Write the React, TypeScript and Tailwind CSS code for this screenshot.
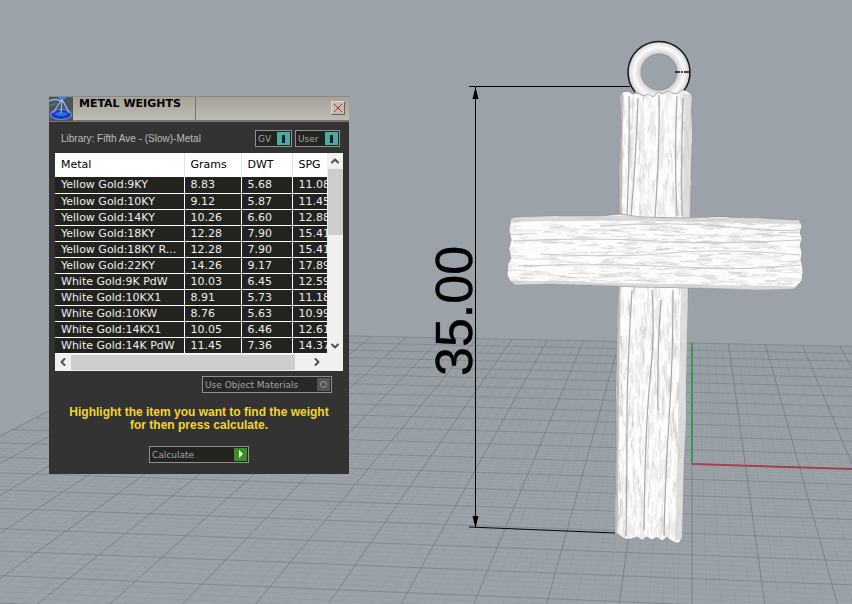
import { useState } from "react";
import { ChevronDown, ChevronLeft, ChevronRight, ChevronUp } from "lucide-react";

const METALS = [
  ["Yellow Gold:9KY", "8.83", "5.68", "11.08"],
  ["Yellow Gold:10KY", "9.12", "5.87", "11.45"],
  ["Yellow Gold:14KY", "10.26", "6.60", "12.88"],
  ["Yellow Gold:18KY", "12.28", "7.90", "15.41"],
  ["Yellow Gold:18KY R...", "12.28", "7.90", "15.41"],
  ["Yellow Gold:22KY", "14.26", "9.17", "17.89"],
  ["White Gold:9K PdW", "10.03", "6.45", "12.59"],
  ["White Gold:10KX1", "8.91", "5.73", "11.18"],
  ["White Gold:10KW", "8.76", "5.63", "10.99"],
  ["White Gold:14KX1", "10.05", "6.46", "12.61"],
  ["White Gold:14K PdW", "11.45", "7.36", "14.37"],
];

// construction plane -> screen
function project(u: number, v: number) {
  const d = 1 - 0.0383 * v - 0.00426 * u;
  return `${(692 + (53.3 * u) / d).toFixed(1)} ${(80 + 384 / d).toFixed(1)}`;
}

function depthLines(step: number) {
  let d = "";
  for (let u = -14; u <= 10; u += step) {
    d += `M${project(u, -12)}L${project(u, 12)}`;
  }
  return d;
}

function crossLines(step: number) {
  let d = "";
  for (let v = -12; v <= 12; v += step) {
    d += `M${project(-14, v)}L${project(10, v)}`;
  }
  return d;
}

const MINOR = depthLines(0.2) + crossLines(0.2);

// small seeded generator so the grain is the same on every render
function makeRandom(seed: number) {
  let s = seed;
  return () => {
    s = (s * 16807) % 2147483647;
    return s / 2147483647;
  };
}

function grain(seed: number, count: number, x: number, y: number, w: number, h: number, vertical: boolean) {
  const rnd = makeRandom(seed);
  let d = "";
  for (let i = 0; i < count; i++) {
    const px = x + rnd() * w;
    const py = y + rnd() * h;
    const len = 4 + rnd() * 18;
    const a = (rnd() - 0.5) * 3;
    const b = (rnd() - 0.5) * 2;
    d += vertical
      ? `M${px.toFixed(1)} ${py.toFixed(1)}q${a.toFixed(1)} ${(len / 2).toFixed(1)} ${b.toFixed(1)} ${len.toFixed(1)}`
      : `M${px.toFixed(1)} ${py.toFixed(1)}q${(len / 2).toFixed(1)} ${a.toFixed(1)} ${len.toFixed(1)} ${b.toFixed(1)}`;
  }
  return d;
}

const POST =
  "M620 96L623 92L628 91L632 94L638 93L643 96L649 94L653 97L658 92L663 94L668 91L673 93L677 94L682 90L687 91L691 94L692 98L691 110L692 130L691 165L690 216L688 290L687 340L686 380L686 420L684 460L683 500L682 537L680 542L676 543L670 540L667 537L662 541L657 537L652 540L647 537L642 540L637 537L631 539L625 539L619 535L615 532L616 450L616 380L618 300L619 216L619 170L621 130Z";
const BEAM =
  "M511 219L516 217L550 216L600 216L620 214L640 217L680 218L720 217L760 218L790 220L799 220L802 226L800 232L802 238L800 246L802 252L801 260L803 270L802 280L797 286L794 289L760 290L700 288L640 287L590 285L550 284L516 285L510 281L507 275L508 264L511 258L509 248L511 240L509 230Z";

function Viewport() {
  return (
    <svg
      className="absolute inset-0 h-full w-full"
      viewBox="0 0 852 604"
      preserveAspectRatio="xMinYMin slice"
      role="img"
      aria-label="Cross pendant, 35.00 high"
    >
      <defs>
        <radialGradient id="ring" gradientUnits="userSpaceOnUse" cx="659" cy="72" r="31">
          <stop offset="0.56" stopColor="#c4c4c4" />
          <stop offset="0.66" stopColor="#dedede" />
          <stop offset="0.8" stopColor="#fbfbfb" />
          <stop offset="0.92" stopColor="#e2e2e2" />
          <stop offset="1" stopColor="#bcbcbc" />
        </radialGradient>
        <clipPath id="postClip">
          <path d={POST} />
        </clipPath>
        <clipPath id="beamClip">
          <path d={BEAM} />
        </clipPath>
        <filter id="grainV" x="0" y="0" width="1" height="1">
          <feTurbulence type="fractalNoise" baseFrequency="0.2 0.05" numOctaves="4" seed="4" />
          <feColorMatrix values="0 0 0 0 0.72  0 0 0 0 0.72  0 0 0 0 0.72  6 0 0 0 -2.8" />
        </filter>
        <filter id="grainH" x="0" y="0" width="1" height="1">
          <feTurbulence type="fractalNoise" baseFrequency="0.04 0.18" numOctaves="4" seed="9" />
          <feColorMatrix values="0 0 0 0 0.74  0 0 0 0 0.74  0 0 0 0 0.74  6 0 0 0 -2.9" />
        </filter>
      </defs>

      <rect width="852" height="604" fill="#9ba2aa" />
      <path d={MINOR} fill="none" stroke="#77818a" strokeWidth="1" opacity="0.16" />
      <path d={crossLines(1)} fill="none" stroke="#6d757d" strokeWidth="1" opacity="0.45" />
      <path d={depthLines(1)} fill="none" stroke="#6d757d" strokeWidth="1" opacity="0.6" />
      <path d="M692 343V464" stroke="#3f9551" strokeWidth="2" />
      <path d="M692 464L852 469" stroke="#a4424d" strokeWidth="2" />

      {/* jump ring */}
      <circle cx="659" cy="72" r="24.500" fill="none" stroke="url(#ring)" strokeWidth="13" />
      <path d="M635 92A31 31 0 1 1 683 92" fill="none" stroke="#161616" strokeWidth="1.500" />
      <circle cx="659" cy="72" r="18" fill="none" stroke="#85888b" strokeWidth="0.700" />
      <path d="M675 72h14" stroke="#111" strokeWidth="1.500" strokeDasharray="5 1 2 1" />

      {/* upright */}
      <path d={POST} fill="#fcfcfc" stroke="#8f8f8f" strokeWidth="0.800" />
      <g clipPath="url(#postClip)">
        <rect x="612" y="88" width="84" height="458" filter="url(#grainV)" opacity="0.55" />
        <path d={grain(31, 160, 614, 90, 78, 450, true)} fill="none" stroke="#fff" strokeWidth="1.400" />
        <path d={grain(17, 300, 614, 90, 78, 450, true)} fill="none" stroke="#a8a8a8" strokeWidth="0.500" opacity="0.7" />
        <path d="M622 94L620 220L618 360L616 540" fill="none" stroke="#999" strokeWidth="3" opacity="0.6" />
        <path d="M689 94L687 220L684 360L680 540" fill="none" stroke="#d2d2d2" strokeWidth="9" opacity="0.7" />
        <path
          d="M629 96q1 60-2 120M638 98q-2 60-7 118M659 95q1 50-4 122M677 96q-3 60 0 120M683 98q-2 60-1 118M632 290q-5 80-5 130t-1 116M652 290q3 40-2 90t-6 150M673 290q0 70-4 130t-5 116M661 300q-4 50-3 110"
          fill="none"
          stroke="#a6a6a6"
          strokeWidth="1.200"
        />
      </g>

      {/* crossbar */}
      <path d={BEAM} fill="#fcfcfc" stroke="#8f8f8f" strokeWidth="0.800" />
      <g clipPath="url(#beamClip)">
        <rect x="505" y="212" width="300" height="80" filter="url(#grainH)" opacity="0.55" />
        <path d={grain(53, 160, 500, 216, 295, 70, false)} fill="none" stroke="#fff" strokeWidth="1.400" />
        <path d={grain(71, 240, 500, 216, 295, 70, false)} fill="none" stroke="#aaa" strokeWidth="0.500" opacity="0.7" />
        <path
          d="M514 241q80-4 140 0t146-1M518 266q90-3 160 1t122-2M540 254q80 4 130-1t130 2M600 226q70-5 130 1t70 2"
          fill="none"
          stroke="#bcbcbc"
          strokeWidth="0.800"
        />
        <path d="M508 219L640 218L802 222M510 283L640 286L800 289" fill="none" stroke="#c4c4c4" strokeWidth="5" opacity="0.6" />
      </g>

      {/* height dimension */}
      <path d="M469 86.500H630M475.500 87V528M469 527L615 533" fill="none" stroke="#000" strokeWidth="1" />
      <path d="M475.500 87l3 12h-6zM475.500 528l3-12h-6z" />
      <text
        className="font-['Liberation_Sans',sans-serif] text-[52px]"
        stroke="#000"
        strokeWidth="0.400"
        transform="translate(472 376) rotate(-90)"
      >
        35.00
      </text>
    </svg>
  );
}

function ScaleIcon() {
  return (
    <svg className="h-6 w-6 shrink-0" viewBox="0 0 24 24" aria-hidden="true">
      <rect width="24" height="24" fill="#50545a" />
      <path d="M0 4q7-3 12 0" fill="none" stroke="#7cc0d8" strokeWidth="1.500" />
      <path d="M0 9q5-3 8-2" fill="none" stroke="#5f7f90" strokeWidth="1" />
      <ellipse cx="12" cy="17.500" rx="10.500" ry="5" fill="#163fa8" stroke="#5f8fee" strokeWidth="1.200" />
      <ellipse cx="12" cy="17" rx="6" ry="2" fill="#2f6cf0" />
      <path d="M13 2L4 16M13 2l7 14M13 2l-1 14" fill="none" stroke="#9cbcf8" strokeWidth="1.200" />
      <path d="M9 1h8" stroke="#3a7bff" strokeWidth="2" />
    </svg>
  );
}

function Toggle({ label, on, onToggle }: { label: string; on: boolean; onToggle: () => void }) {
  return (
    <button
      type="button"
      aria-pressed={on}
      onClick={onToggle}
      className={
        (label.length > 2 ? "w-[45px]" : "w-[37px]") +
        " flex h-[17px] items-center justify-between border border-[#909090] bg-[#232320] pr-px pl-0.5 font-['DejaVu_Sans',sans-serif] text-[9px] leading-[13px] text-[#a3a3a3]"
      }
    >
      <span className="pt-0.5">{label}</span>
      <span className="flex h-[13px] w-[13px] items-center justify-center bg-[#4fa9a5]">
        <span className={on ? "h-2 w-[3px] bg-[#10201f]" : "h-2 w-2 rounded-full border border-[#10201f]"} />
      </span>
    </button>
  );
}

export default function App() {
  const [gv, setGv] = useState(true);
  const [user, setUser] = useState(true);
  const [selected, setSelected] = useState(-1);

  return (
    <main className="relative min-h-screen overflow-hidden bg-[#9ba2aa]">
      <Viewport />

      <section className="absolute top-24 left-[49px] w-[300px] bg-[#333333] pb-[11px] font-['DejaVu_Sans',sans-serif]">
        <header className="flex h-[26px] border-t border-b-2 border-t-[#8b8983] border-b-[#77756f] bg-linear-to-b from-[#a5a29a] to-[#c0bcb3]">
          <ScaleIcon />
          <h1 className="w-[123px] border-r border-[#77756f] pl-1.5 text-[11px] leading-[14px] font-bold text-black">
            METAL WEIGHTS
          </h1>
          <button
            type="button"
            aria-label="Close"
            className="mt-1 mr-1 ml-auto flex h-[14px] w-[14px] items-center justify-center border border-t-[#dedbd2] border-r-[#66635d] border-b-[#66635d] border-l-[#dedbd2] bg-[#c9b9b1]"
          >
            <svg className="h-2 w-2" viewBox="0 0 8 8">
              <path d="M0 0l8 8M8 0L0 8" stroke="#9c3b38" strokeWidth="1" />
            </svg>
          </button>
        </header>

        <div className="flex items-center gap-[3px] pt-2 pr-[9px] pl-3">
          <p className="mr-auto font-['Liberation_Sans',sans-serif] text-[10px] leading-[13px] text-[#bdbdbd]">
            Library: Fifth Ave - (Slow)-Metal
          </p>
          <Toggle label="GV" on={gv} onToggle={() => setGv(!gv)} />
          <Toggle label="User" on={user} onToggle={() => setUser(!user)} />
        </div>

        <div className="mx-1.5 mt-1.5 bg-[#f0f0f0]">
          <div className="flex">
            <div className="w-[272px] overflow-hidden">
              <table className="w-[290px] table-fixed border-collapse text-left text-[11px]">
                <colgroup>
                  <col className="w-[129px]" />
                  <col className="w-[57px]" />
                  <col className="w-[51px]" />
                  <col />
                </colgroup>
                <thead>
                  <tr className="h-6 bg-white text-black">
                    {["Metal", "Grams", "DWT", "SPG"].map((name) => (
                      <th key={name} className="border-r border-[#e4e4e4] px-1.5 py-0 font-normal">
                        {name}
                      </th>
                    ))}
                  </tr>
                </thead>
                <tbody>
                  {METALS.map((row, i) => (
                    <tr
                      key={row[0]}
                      onClick={() => setSelected(i)}
                      className={
                        i === selected
                          ? "h-4 bg-[#3a6ea5] leading-[15px] text-white"
                          : "h-4 bg-[#22221f] leading-[15px] text-[#eeeeee]"
                      }
                    >
                      {row.map((cell, c) => (
                        <td key={c} className="border-r border-b border-white px-1.5 py-0 whitespace-nowrap">
                          {cell}
                        </td>
                      ))}
                    </tr>
                  ))}
                </tbody>
              </table>
            </div>
            <div className="flex w-4 flex-col items-center text-[#505050]">
              <ChevronUp className="my-0.5 h-3 w-3" strokeWidth={4} />
              <div className="h-[66px] w-[15px] bg-[#cdcdcd]" />
              <ChevronDown className="mt-auto mb-0.5 h-3 w-3" strokeWidth={4} />
            </div>
          </div>
          <div className="flex h-[17px] items-center text-[#505050]">
            <ChevronLeft className="mx-0.5 h-3 w-3" strokeWidth={4} />
            <div className="h-[15px] w-56 bg-[#cdcdcd]" />
            <ChevronRight className="ml-4 h-3 w-3" strokeWidth={4} />
          </div>
        </div>

        <button
          type="button"
          className="mt-[5px] mr-[17px] ml-auto flex h-[17px] w-[130px] items-center justify-between border border-[#8f8f8f] bg-[#282825] pr-px pl-0.5 text-[9px] leading-[13px] text-[#a3a3a3]"
        >
          <span className="pt-0.5">Use Object Materials</span>
          <span className="flex h-[13px] w-[13px] items-center justify-center bg-[#555555]">
            <span className="h-[7px] w-[7px] rounded-full border border-[#a0a0a0]" />
          </span>
        </button>

        <p className="mt-[13px] text-center font-['Liberation_Sans',sans-serif] text-[12px] leading-[13px] font-bold text-[#f2d72e]">
          Highlight the item you want to find the weight
          <br />
          for then press calculate.
        </p>

        <button
          type="button"
          className="mx-auto mt-3.5 flex h-[17px] w-[100px] items-center justify-between border border-[#8f8f8f] bg-[#232320] pr-px pl-0.5 text-[9px] leading-[13px] text-[#a3a3a3]"
        >
          <span className="pt-0.5">Calculate</span>
          <span className="flex h-[13px] w-[13px] items-center justify-center bg-[#3f8a2a]">
            <svg className="h-2 w-2" viewBox="0 0 8 8">
              <path d="M2 0l4 4-4 4z" fill="#e4ffd8" />
            </svg>
          </span>
        </button>
      </section>
    </main>
  );
}
